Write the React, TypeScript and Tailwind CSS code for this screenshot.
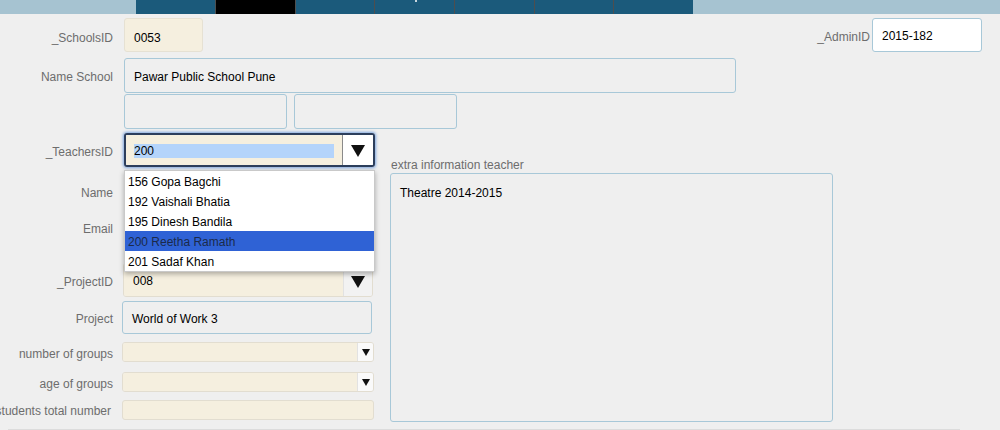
import React from "react";

const teachers = [
  "156 Gopa Bagchi",
  "192 Vaishali Bhatia",
  "195 Dinesh Bandila",
  "200 Reetha Ramath",
  "201 Sadaf Khan",
];

function Label({ children, className = "" }: { children: React.ReactNode; className?: string }) {
  return (
    <div className={`w-[124px] shrink-0 pr-[11px] pt-[3px] text-right text-[12px] text-[#6d6d6d] whitespace-nowrap ${className}`}>
      {children}
    </div>
  );
}

function Caret({ small }: { small?: boolean }) {
  return small ? (
    <svg width="8" height="7" viewBox="0 0 8 7">
      <path d="M0 0 H8 L4 7 Z" fill="#111" />
    </svg>
  ) : (
    <svg width="14" height="12" viewBox="0 0 14 12">
      <path d="M0 0 H14 L7 12 Z" fill="#111" />
    </svg>
  );
}

export default function App() {
  return (
    <div
      className="w-[1000px] h-[430px] overflow-hidden bg-[#efefef] text-black"
      style={{ fontFamily: '"Liberation Sans", Arial, sans-serif' }}
    >
      {/* top tab bar */}
      <div className="h-[14px] bg-[#a6c3d1] flex pl-[136px]">
        <div className="w-[80px] h-full bg-[#1b5a7b] border-r border-[#4e4e4e]" />
        <div className="w-[80px] h-full bg-black border-r border-[#4e4e4e]" />
        <div className="w-[79px] h-full bg-[#1b5a7b] border-r border-[#4e4e4e]" />
        <div className="w-[80px] h-full bg-[#1b5a7b] border-r border-[#4e4e4e] relative">
          <div className="absolute left-[40px] top-0 w-[2px] h-[2px] bg-[#c8d6de]" />
        </div>
        <div className="w-[80px] h-full bg-[#1b5a7b] border-r border-[#4e4e4e]" />
        <div className="w-[79px] h-full bg-[#1b5a7b] border-r border-[#4e4e4e]" />
        <div className="w-[79px] h-full bg-[#1b5a7b]" />
      </div>

      {/* SchoolsID / AdminID */}
      <div className="mt-[4px] h-[34px] flex items-center">
        <Label className="pt-[6px]">_SchoolsID</Label>
        <div className="w-[79px] h-[34px] bg-[#f5efdf] border border-[#e6e1d3] rounded-[3px] flex items-center pl-[9px] pt-[6px] text-[12px]">
          0053
        </div>
        <div className="ml-auto flex items-center mr-[18px]">
          <div className="text-[12px] text-[#6d6d6d] mr-[2px] pt-[3px]">_AdminID</div>
          <div className="w-[110px] h-[34px] bg-white border border-[#a8c8d8] rounded-[3px] flex items-center pl-[9px] pt-[1px] text-[12px]">
            2015-182
          </div>
        </div>
      </div>

      {/* Name School */}
      <div className="mt-[6px] h-[35px] flex items-center">
        <Label>Name School</Label>
        <div className="w-[612px] h-[35px] border border-[#a8c8d8] rounded-[3px] flex items-center pl-[9px] pt-[3px] text-[12px]">
          Pawar Public School Pune
        </div>
      </div>

      {/* address boxes */}
      <div className="mt-[1px] h-[35px] flex items-center pl-[124px] gap-[7px]">
        <div className="w-[163px] h-[35px] border border-[#a8c8d8] rounded-[3px]" />
        <div className="w-[163px] h-[35px] border border-[#a8c8d8] rounded-[3px]" />
      </div>

      {/* teacher + project section */}
      <div className="flex gap-[15px]">
        <div className="w-[375px] relative">
          {/* _TeachersID */}
          <div className="mt-[4px] h-[34px] flex items-center">
            <Label>_TeachersID</Label>
            <div className="w-[251px] h-[34px] flex rounded-[3px] border-2 border-[#2c3e5c] shadow-[0_0_3px_1px_#7fa8e0] overflow-hidden">
              <div className="flex-1 bg-[#f5efdf] flex items-center pl-[8px] pr-[8px] pt-[2px]">
                <div className="w-full h-[14px] bg-[#b4d4fb] text-[12px] leading-[14px]">200</div>
              </div>
              <div className="w-[31px] bg-white border-l border-[#8a8a8a] flex items-center justify-center pt-[1px]">
                <Caret />
              </div>
            </div>
          </div>

          {/* Name */}
          <div className="mt-[7px] h-[34px] flex items-center">
            <Label>Name</Label>
            <div className="w-[252px] h-[34px] border border-[#a8c8d8] rounded-[3px]" />
          </div>

          {/* Email */}
          <div className="mt-[2px] h-[34px] flex items-center">
            <Label>Email</Label>
            <div className="w-[252px] h-[34px] border border-[#a8c8d8] rounded-[3px]" />
          </div>

          {/* _ProjectID */}
          <div className="mt-[19px] h-[34px] flex items-center">
            <Label>_ProjectID</Label>
            <div className="w-[250px] h-[34px] flex rounded-[3px] border border-[#e2ddd0] overflow-hidden -ml-[1px]">
              <div className="flex-1 bg-[#f5efdf] flex items-center pl-[9px] pt-[2px] text-[12px]">008</div>
              <div className="w-[29px] bg-[#f2f2f2] border-l border-[#e2e2e2] flex items-center justify-center pt-[4px]">
                <Caret />
              </div>
            </div>
          </div>

          {/* Project */}
          <div className="mt-[4px] h-[33px] flex items-center">
            <Label>Project</Label>
            <div className="w-[250px] h-[33px] -ml-[2px] border border-[#a8c8d8] rounded-[3px] flex items-center pl-[9px] pt-[3px] text-[12px]">
              World of Work 3
            </div>
          </div>

          {/* number of groups */}
          <div className="mt-[8px] h-[20px] flex items-center">
            <Label className="pt-[1px]">number of groups</Label>
            <div className="w-[252px] h-[20px] -ml-[2px] flex rounded-[3px] border border-[#e2ddd0] overflow-hidden">
              <div className="flex-1 bg-[#f5efdf]" />
              <div className="w-[16px] bg-[#fafafa] border-l border-[#e2e2e2] flex items-center justify-center">
                <Caret small />
              </div>
            </div>
          </div>

          {/* age of groups */}
          <div className="mt-[10px] h-[20px] flex items-center">
            <Label className="pt-[1px]">age of groups</Label>
            <div className="w-[252px] h-[20px] -ml-[2px] flex rounded-[3px] border border-[#e2ddd0] overflow-hidden">
              <div className="flex-1 bg-[#f5efdf]" />
              <div className="w-[16px] bg-[#fafafa] border-l border-[#e2e2e2] flex items-center justify-center">
                <Caret small />
              </div>
            </div>
          </div>

          {/* students total number */}
          <div className="mt-[8px] h-[20px] flex items-center">
            <div className="w-[124px] shrink-0 pr-[13px] pt-[1px] flex justify-end">
              <span className="text-[12px] text-[#6d6d6d] whitespace-nowrap">students total number</span>
            </div>
            <div className="w-[252px] h-[20px] -ml-[2px] bg-[#f5efdf] rounded-[3px] border border-[#e2ddd0]" />
          </div>

          {/* dropdown list overlay */}
          <div className="absolute left-[124px] top-[41px] w-[251px] bg-white border border-[#c9c9c9] shadow-[0_2px_5px_rgba(0,0,0,0.3)]">
            {teachers.map((t) => (
              <div
                key={t}
                className={`h-[20px] pl-[3px] pt-[1px] flex items-center text-[12px] ${
                  t.startsWith("200") ? "bg-[#2f62d5] text-[#1b2a4a]" : "text-black"
                }`}
              >
                {t}
              </div>
            ))}
          </div>
        </div>

        {/* extra information teacher */}
        <div className="pt-[28px]">
          <div className="text-[12px] leading-[14px] text-[#6d6d6d] pl-[1px] pt-[1px]">extra information teacher</div>
          <div className="mt-[1px] w-[443px] h-[249px] border border-[#a8c8d8] rounded-[3px] pl-[9px] pt-[10px] text-[12px]">
            Theatre 2014-2015
          </div>
        </div>
      </div>

      <div className="mt-[7px] ml-[8px] w-[952px] h-[2px] bg-[#dcdcdc]" />
    </div>
  );
}
